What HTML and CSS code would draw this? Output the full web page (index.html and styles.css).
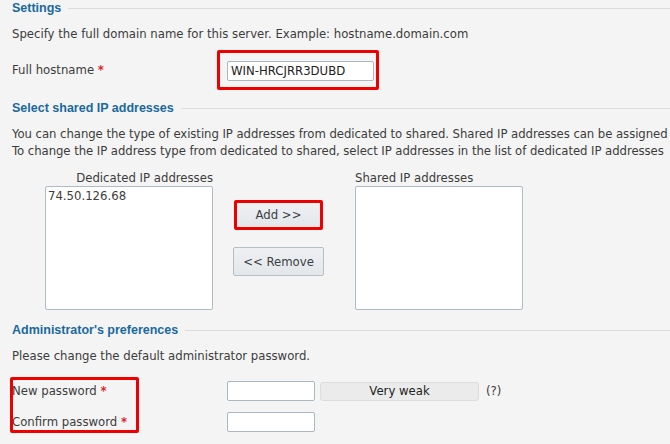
FILE: index.html
```html
<!DOCTYPE html>
<html lang="en">
<head>
    <meta charset="UTF-8">
    <title>Settings</title>
    <link rel="stylesheet" href="styles.css">
</head>
<body>

    <!-- Settings -->
    <div class="section">
        <div class="section-title"><span>Settings</span></div>
        <p class="hint">Specify the full domain name for this server. Example: hostname.domain.com</p>
        <div class="form-row row-hostname">
            <label class="field-label">Full hostname <span class="required">*</span></label>
            <span class="marked">
                <input type="text" class="text-input input-hostname" value="WIN-HRCJRR3DUBD">
            </span>
        </div>
    </div>

    <!-- Shared IP addresses -->
    <div class="section">
        <div class="section-title"><span>Select shared IP addresses</span></div>
        <p class="hint hint-ip">You can change the type of existing IP addresses from dedicated to shared. Shared IP addresses can be assigned<br>To change the IP address type from dedicated to shared, select IP addresses in the list of dedicated IP addresses</p>

        <div class="ip-lists">
            <div class="ip-col ip-col-left">
                <div class="ip-caption">Dedicated IP addresses</div>
                <div class="ip-list">
                    <div class="ip-item">74.50.126.68</div>
                </div>
            </div>
            <div class="ip-buttons">
                <button class="btn btn-marked">Add &gt;&gt;</button>
                <button class="btn">&lt;&lt; Remove</button>
            </div>
            <div class="ip-col">
                <div class="ip-caption">Shared IP addresses</div>
                <div class="ip-list"></div>
            </div>
        </div>
    </div>

    <!-- Administrator's preferences -->
    <div class="section">
        <div class="section-title"><span>Administrator's preferences</span></div>
        <p class="hint">Please change the default administrator password.</p>
        <div class="password-rows">
            <div class="labels-mark"></div>
            <div class="form-row">
                <label class="field-label">New password <span class="required">*</span></label>
                <input type="password" class="text-input input-pass">
                <div class="strength">Very weak</div>
                <span class="help">(?)</span>
            </div>
            <div class="form-row">
                <label class="field-label">Confirm password <span class="required">*</span></label>
                <input type="password" class="text-input input-pass">
            </div>
        </div>
    </div>

</body>
</html>
```

FILE: styles.css
```css
html, body {
    margin: 0;
    background: #f4f4f4;
    overflow: hidden;
}

body {
    font-family: "DejaVu Sans", Verdana, sans-serif;
    font-size: 11.7px;
    color: #3c3c3c;
    padding: 0 0 0 12px;
    width: 660px;
}

.section-title {
    display: flex;
    align-items: center;
    height: 16px;
    font-family: "Liberation Sans", Arial, sans-serif;
    font-size: 12.5px;
    font-weight: bold;
    color: #1a699e;
}

.section-title::after {
    content: "";
    flex: 1;
    height: 1px;
    background: #dcdcdc;
    margin-left: 7px;
}

.hint {
    margin: 0;
    line-height: 17px;
    white-space: nowrap;
}

.hint-ip {
    letter-spacing: -0.06px;
}

.section:first-child .hint {
    margin-top: 10px;
}

.form-row {
    display: flex;
    align-items: center;
}

.field-label {
    width: 215px;
    flex: none;
}

.required {
    color: #d9272e;
    font-weight: bold;
}

.text-input {
    box-sizing: border-box;
    height: 20px;
    border: 1px solid #a9b8c2;
    border-radius: 2px;
    background: #fff;
    font-family: inherit;
    font-size: 11.7px;
    color: #222;
    padding: 0 3px;
    margin: 0;
}

.row-hostname {
    margin-top: 7px;
    margin-bottom: 10px;
}

.row-hostname .field-label {
    width: 205px;
}

.marked {
    display: inline-block;
    border: 3px solid #ee0000;
    border-radius: 2px;
    padding: 8px 2px 6px 7px;
    line-height: 0;
}

.input-hostname {
    width: 147px;
}

/* IP lists */
.section:nth-child(2) .hint {
    margin-top: 10px;
}

.ip-lists {
    display: flex;
    margin-top: 10px;
    margin-left: 33px;
}

.ip-col {
    display: flex;
    flex-direction: column;
}

.ip-col-left {
    align-items: flex-end;
}

.ip-caption {
    line-height: 16px;
}

.ip-list {
    box-sizing: border-box;
    width: 168px;
    height: 124px;
    background: #fff;
    border: 1px solid #aebcc6;
    border-radius: 2px;
    padding: 2px 2px;
}

.ip-item {
    line-height: 14px;
}

.ip-buttons {
    display: flex;
    flex-direction: column;
    align-items: center;
    width: 91px;
    margin: 30px 31px 0 20px;
}

.btn {
    box-sizing: border-box;
    width: 91px;
    height: 29px;
    border: 1px solid #b4c0c8;
    border-radius: 2px;
    background: linear-gradient(#eef0f2, #e4e7ea);
    font-family: inherit;
    font-size: 11.7px;
    color: #3a3f44;
    padding: 0;
    margin: 0 0 17px;
}

.btn-marked {
    width: 89px;
    height: 30px;
    border: 3px solid #ee0000;
}

/* Password block */
.section:nth-child(3) {
    margin-top: 12px;
}

.section:nth-child(3) .hint {
    margin-top: 10px;
}

.password-rows {
    position: relative;
    margin-top: 16px;
}

.password-rows .form-row {
    margin-bottom: 11px;
}

.labels-mark {
    position: absolute;
    left: -2px;
    top: -4px;
    width: 123px;
    height: 50px;
    border: 3px solid #ee0000;
    border-radius: 2px;
}

.input-pass {
    width: 88px;
}

.strength {
    box-sizing: border-box;
    width: 159px;
    height: 19px;
    line-height: 17px;
    margin-left: 5px;
    text-align: center;
    background: #ebebeb;
    border: 1px solid #dddddd;
    border-radius: 3px;
    color: #222;
}

.help {
    margin-left: 7px;
}
```
